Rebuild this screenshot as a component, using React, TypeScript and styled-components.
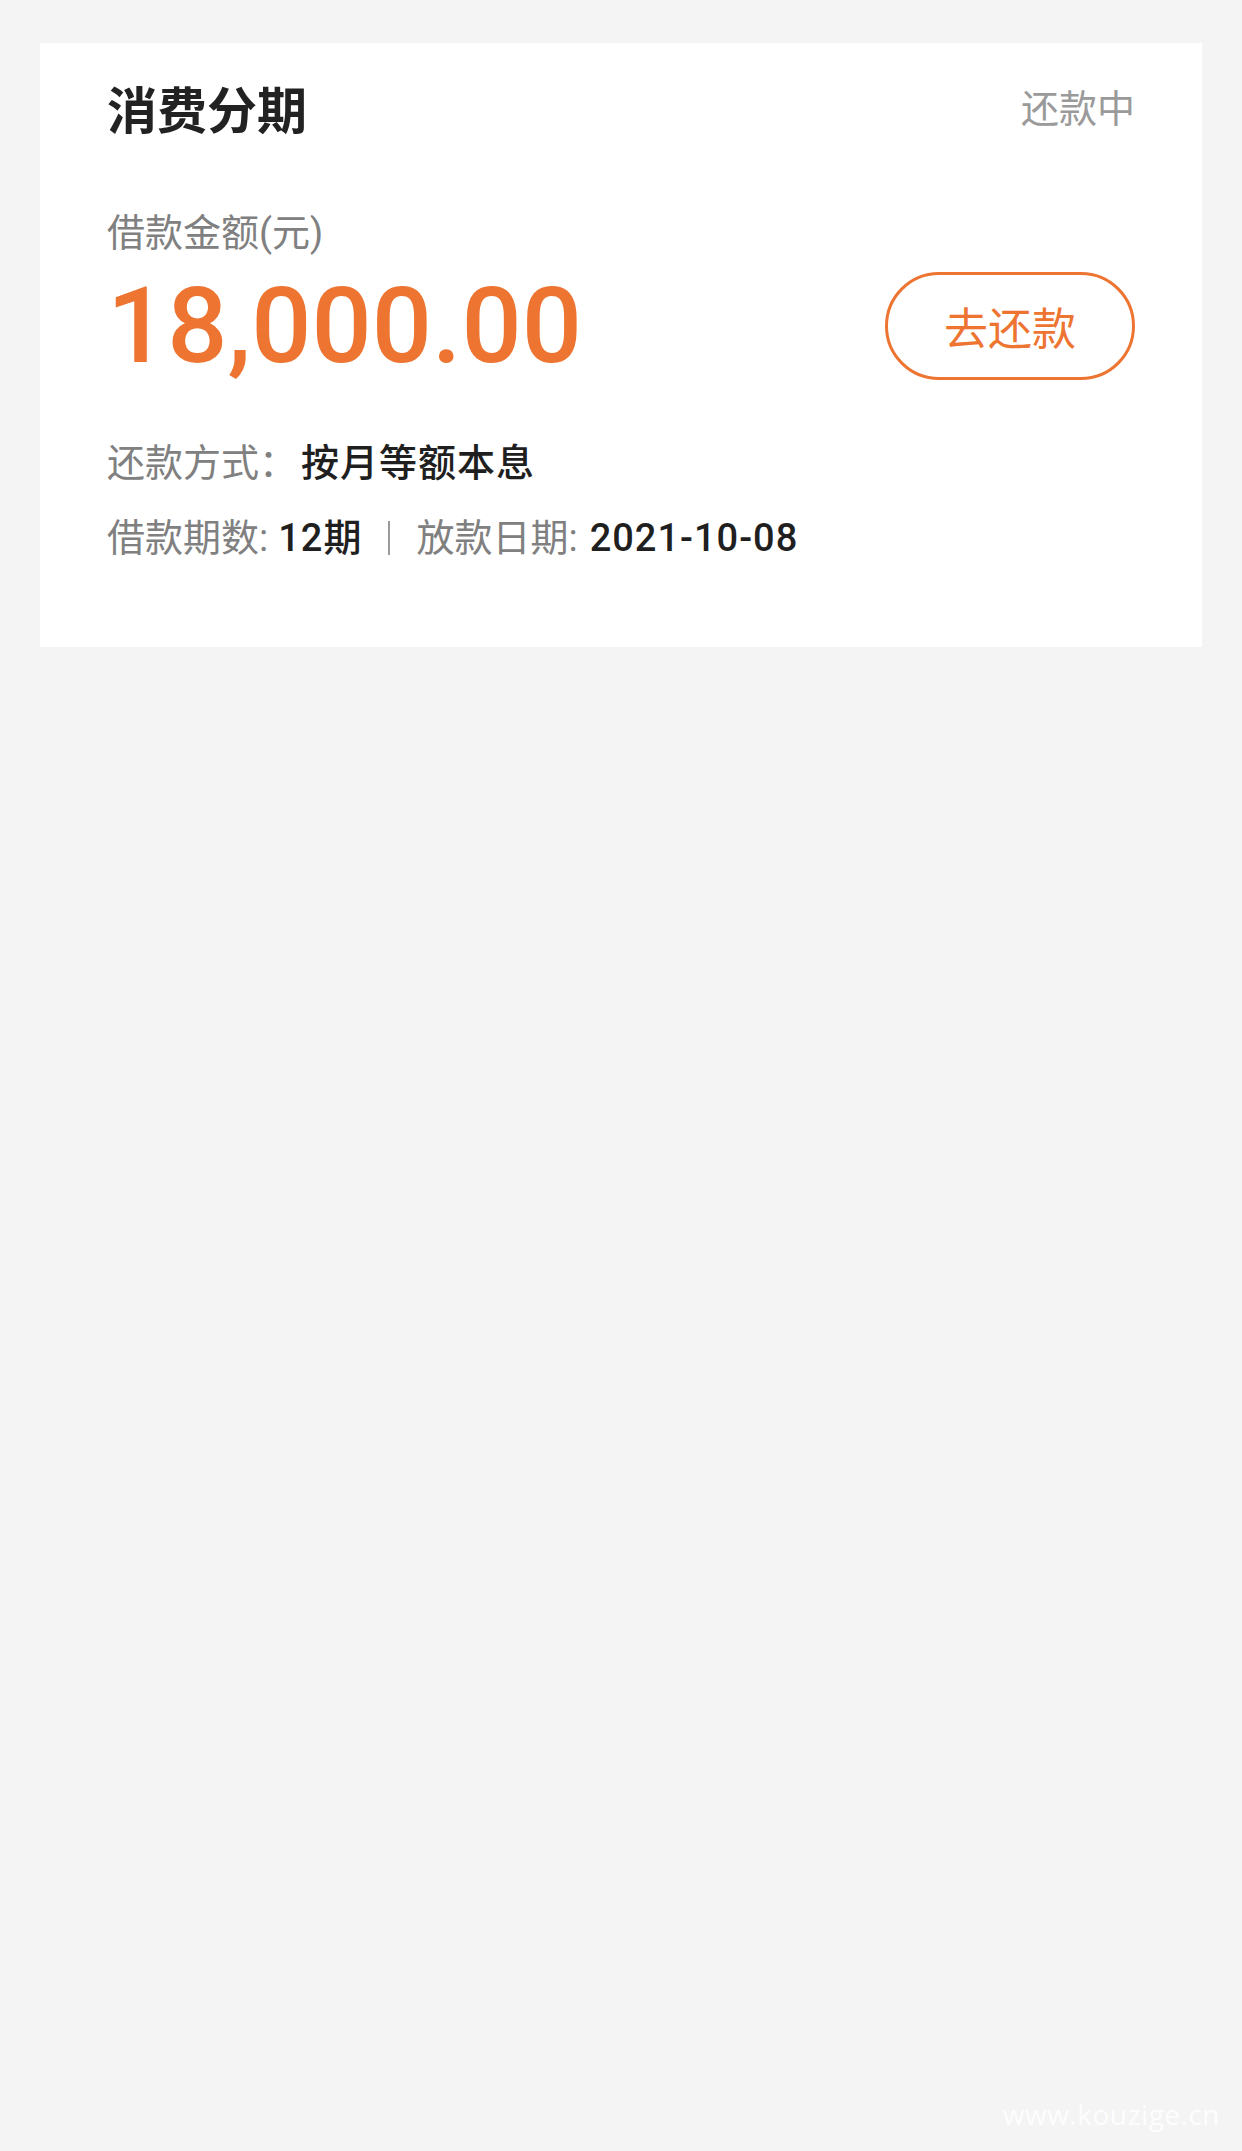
import React from "react";
import styled, {createGlobalStyle} from "styled-components";

const GlobalStyle = createGlobalStyle`
  html, body {
    margin: 0;
    padding: 0;
    background: #f4f4f4;
  }

  * {
    box-sizing: border-box;
  }
`

const Page = styled.div`
  position: relative;
  min-height: 2151px;
  padding-top: 43px;
  background: #f4f4f4;
  font-family: Roboto, "Noto Sans CJK SC", "Noto Sans", sans-serif;
`

const Card = styled.section`
  margin: 0 40px;
  padding: 44px 67px 90px 67px;
  background: #ffffff;
`

const Header = styled.div`
  display: flex;
  justify-content: space-between;
  align-items: flex-start;
`

const Title = styled.h2`
  margin: 0;
  font-size: 50px;
  line-height: 50px;
  font-weight: 700;
  color: #222222;
`

const Status = styled.span`
  margin-top: 3px;
  font-size: 38px;
  line-height: 38px;
  color: #9a9a9a;
`

const AmountLabel = styled.p`
  margin: 77px 0 0 0;
  font-size: 38px;
  line-height: 38px;
  color: #808080;
`

const AmountRow = styled.div`
  display: flex;
  justify-content: space-between;
  align-items: center;
  margin-top: 20px;
`

const Amount = styled.span`
  font-family: Roboto, sans-serif;
  font-size: 106px;
  line-height: 108px;
  font-weight: 500;
  color: #ed7431;
`

const RepayButton = styled.button`
  width: 250px;
  height: 108px;
  border: 3px solid #ed7431;
  border-radius: 54px;
  background: #ffffff;
  color: #ed7431;
  font-family: "Noto Sans CJK SC", sans-serif;
  font-size: 44px;
  cursor: pointer;
`

const InfoList = styled.div`
  display: flex;
  flex-direction: column;
  gap: 37px;
  margin-top: 64px;
`

const InfoRow = styled.div`
  display: flex;
  align-items: center;
  font-size: 38px;
  line-height: 38px;
`

const Label = styled.span`
  color: #808080;
`

const Value = styled.span<{ gap?: number }>`
  margin-left: ${({gap}) => gap ?? 0}px;
  color: #1f1f1f;
  font-weight: 500;
  letter-spacing: 1px;
`

const Divider = styled.span`
  display: inline-block;
  width: 2px;
  height: 34px;
  margin: 0 26px;
  background: #9a9a9a;
`

const Watermark = styled.span`
  position: absolute;
  right: 22px;
  bottom: 18px;
  font-family: "Open Sans", sans-serif;
  font-size: 28px;
  color: rgba(255, 255, 255, 0.9);
  letter-spacing: 0.5px;
`

const App: React.FC = () => {
    return (
        <Page>
            <GlobalStyle/>
            <Card>
                <Header>
                    <Title>消费分期</Title>
                    <Status>还款中</Status>
                </Header>
                <AmountLabel>借款金额(元)</AmountLabel>
                <AmountRow>
                    <Amount>18,000.00</Amount>
                    <RepayButton>去还款</RepayButton>
                </AmountRow>
                <InfoList>
                    <InfoRow>
                        <Label>还款方式：</Label>
                        <Value gap={4}>按月等额本息</Value>
                    </InfoRow>
                    <InfoRow>
                        <Label>借款期数:</Label>
                        <Value gap={10}>12期</Value>
                        <Divider/>
                        <Label>放款日期:</Label>
                        <Value gap={12}>2021-10-08</Value>
                    </InfoRow>
                </InfoList>
            </Card>
            <Watermark>www.kouzige.cn</Watermark>
        </Page>
    )
}

export default App
